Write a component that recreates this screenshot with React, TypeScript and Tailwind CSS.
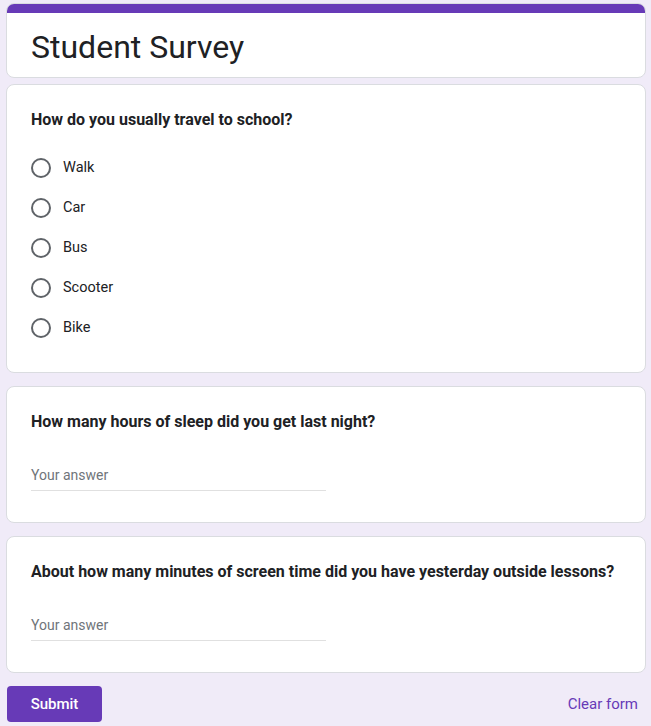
import React from "react";

const options = ["Walk", "Car", "Bus", "Scooter", "Bike"];

function TextQuestion({ title }: { title: string }) {
  return (
    <div className="bg-white rounded-lg border border-[#dadce0] px-6 pt-[23px] pb-[31px]">
      <div className="text-[16px] leading-6 font-bold text-[#202124]">{title}</div>
      <div className="mt-[31px] w-[295px] border-b border-[#e0e0e0] pb-[5px] text-[14px] leading-5 text-[#70757a]">
        Your answer
      </div>
    </div>
  );
}

export default function App() {
  return (
    <div
      className="min-h-screen bg-[#f0ebf8] pt-[3px] pl-[6px] pr-[5px]"
      style={{ fontFamily: "Roboto, 'Liberation Sans', sans-serif" }}
    >
      {/* Title card */}
      <div className="h-[75px] bg-white rounded-lg border border-[#dadce0] overflow-hidden">
        <div className="h-[10px] bg-[#673ab7] -mx-px -mt-px"></div>
        <div className="px-6 pt-[14px]">
          <h1 className="text-[32px] leading-10 text-[#202124]">Student Survey</h1>
        </div>
      </div>

      {/* Radio question */}
      <div className="mt-[6px] bg-white rounded-lg border border-[#dadce0] px-6 pt-[23px] pb-[24px]">
        <div className="text-[16px] leading-6 font-bold text-[#202124]">
          How do you usually travel to school?
        </div>
        <div className="mt-[16px]">
          {options.map((o) => (
            <div key={o} className="h-10 flex items-center gap-3">
              <div className="w-5 h-5 rounded-full border-2 border-[#5f6368]"></div>
              <span className="text-[14.5px] text-[#202124]">{o}</span>
            </div>
          ))}
        </div>
      </div>

      <div className="mt-[13px]">
        <TextQuestion title="How many hours of sleep did you get last night?" />
      </div>
      <div className="mt-[13px]">
        <TextQuestion title="About how many minutes of screen time did you have yesterday outside lessons?" />
      </div>

      {/* Footer */}
      <div className="mt-[13px] flex items-center justify-between pr-[8px]">
        <button className="w-[95px] h-9 ml-px rounded bg-[#673ab7] text-white text-[15px] font-medium">
          Submit
        </button>
        <span className="text-[15px] text-[#673ab7]">Clear form</span>
      </div>
    </div>
  );
}
